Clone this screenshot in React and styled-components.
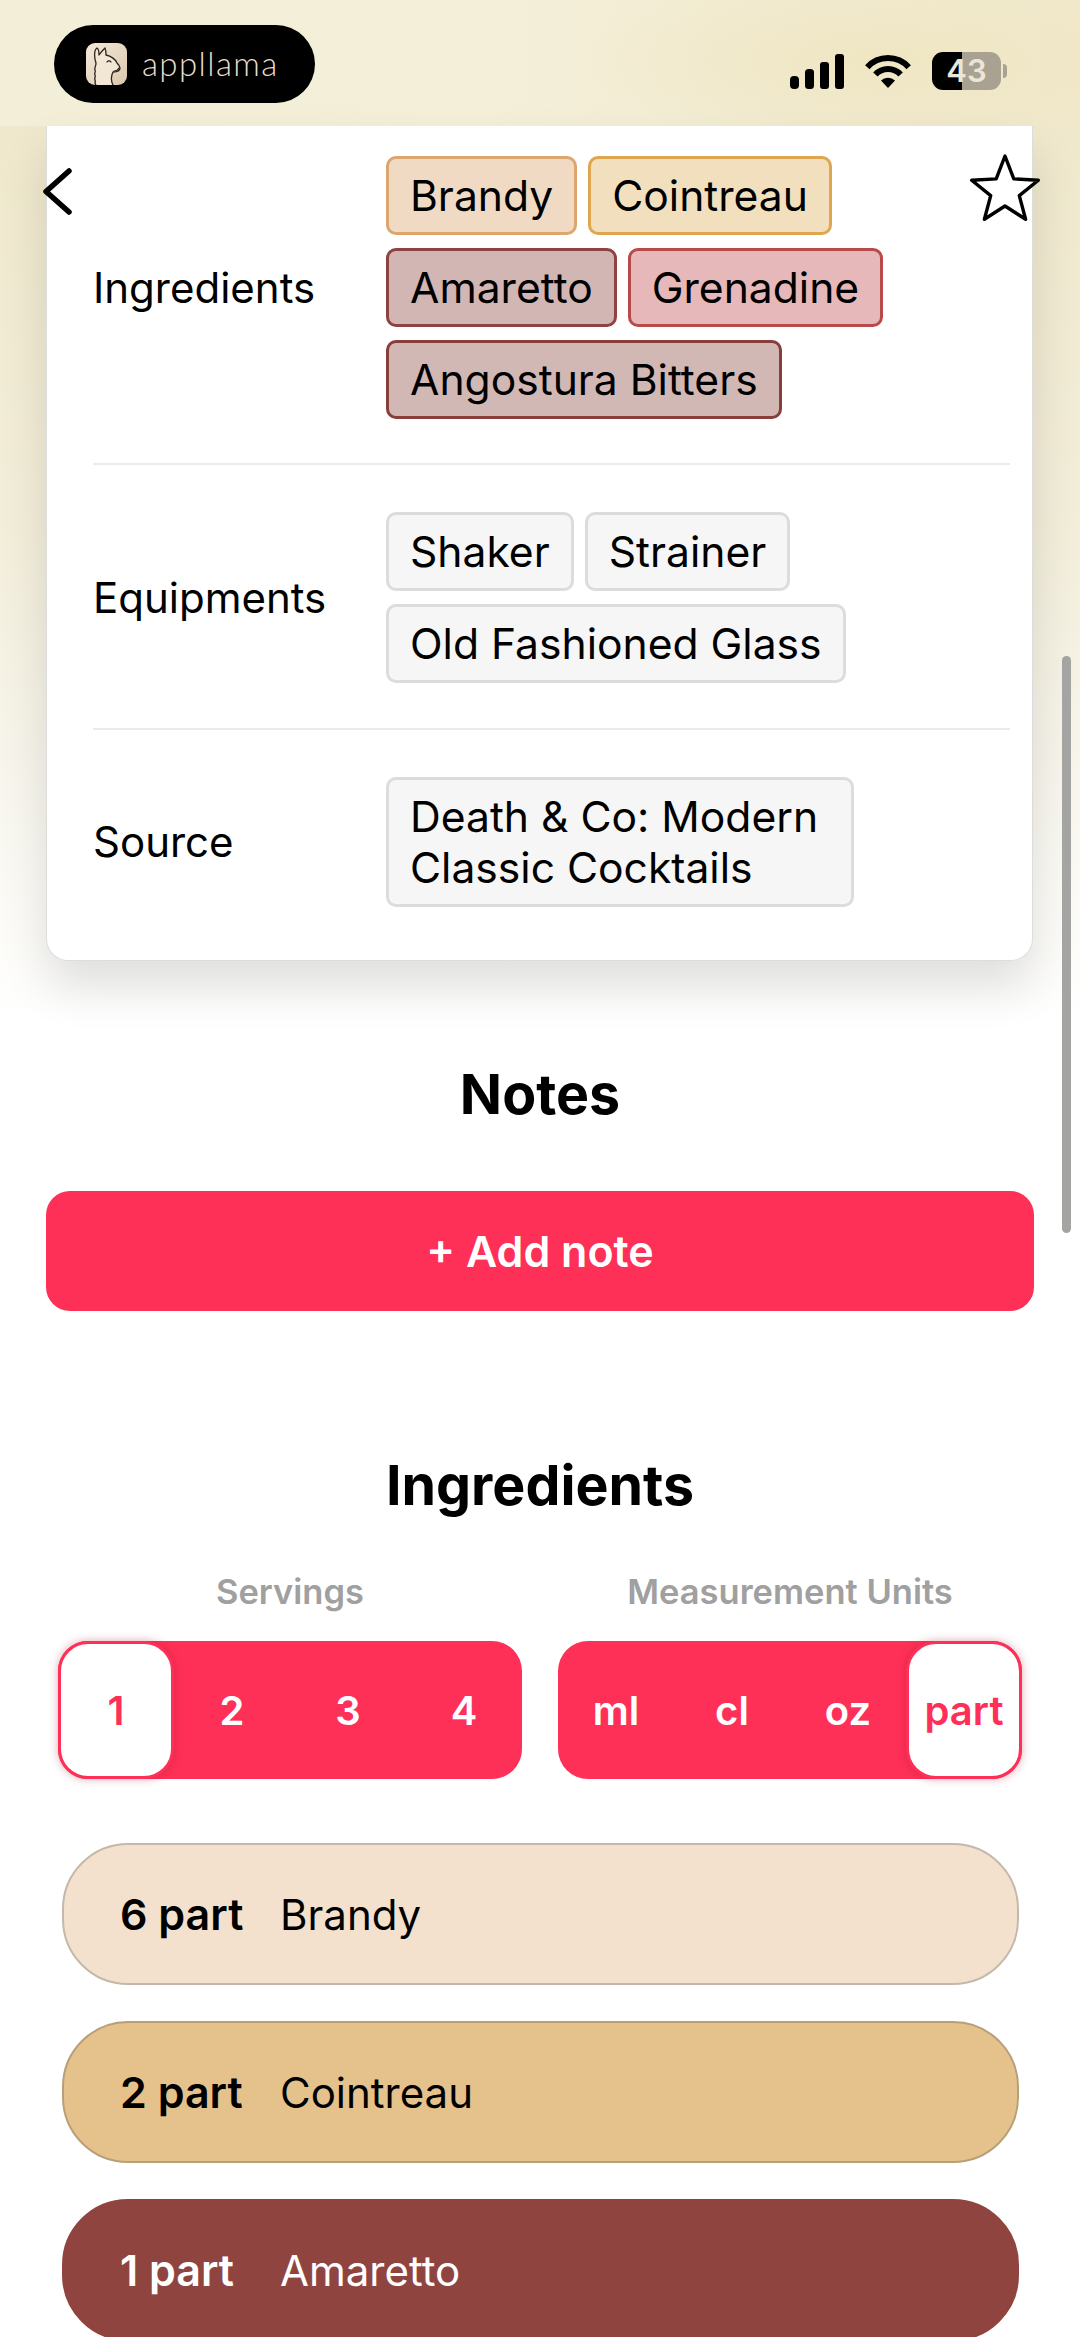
import styled, { createGlobalStyle } from "styled-components";

const GlobalStyle = createGlobalStyle`
  html, body {
    margin: 0;
    padding: 0;
    background: #ffffff;
  }
  * {
    box-sizing: border-box;
  }
`;

const Page = styled.div`
  position: relative;
  width: 1080px;
  height: 2337px;
  overflow: hidden;
  background: #ffffff;
  color: #000000;
  font-family: Inter, "Noto Sans", sans-serif;
`;

const StatusBar = styled.header`
  height: 126px;
  padding: 25px 79px 0 54px;
  display: flex;
  justify-content: space-between;
  align-items: flex-start;
  background:
    radial-gradient(ellipse 300px 90px at 880px 60px, #efe6c3 0%, rgba(239, 230, 195, 0) 100%),
    linear-gradient(90deg, #f3eed8 0%, #f4efd9 45%, #f0e8ca 100%);
`;

const BrandPill = styled.div`
  width: 261px;
  height: 78px;
  border-radius: 39px;
  background: #000000;
  display: flex;
  align-items: center;
  gap: 15px;
  padding-left: 32px;
`;

const BrandName = styled.span`
  font-family: Lato, sans-serif;
  font-weight: 300;
  font-size: 33px;
  letter-spacing: 1.4px;
  line-height: 1;
  color: #e8decd;
  padding-bottom: 2px;
`;

const StatusIcons = styled.div`
  display: flex;
  align-items: center;
  gap: 21px;
  padding-top: 27px;
`;

const Battery = styled.div`
  position: relative;
  width: 69px;
  height: 38px;
  border-radius: 11px;
  background: linear-gradient(90deg, #000000 0 43%, #a9a292 43% 100%);
  color: #ebe6d8;
  font-size: 31px;
  font-weight: 600;
  line-height: 38px;
  text-align: center;

  &::after {
    content: "";
    position: absolute;
    left: 71px;
    top: 12px;
    width: 4px;
    height: 14px;
    border-radius: 0 4px 4px 0;
    background: #a9a292;
  }
`;

const NavOverlay = styled.nav`
  position: absolute;
  top: 153px;
  left: 43px;
  right: 40px;
  display: flex;
  justify-content: space-between;
  align-items: flex-start;
`;

const BackIcon = styled.svg`
  margin-top: 15px;
`;

const Scrollbar = styled.div`
  position: absolute;
  top: 656px;
  left: 1062px;
  width: 9px;
  height: 577px;
  border-radius: 5px;
  background: #a4a4a2;
`;

const CardStage = styled.section`
  padding: 0 47px 60px 46px;
  background: linear-gradient(180deg, #efe8cc 0%, #f3eeda 45%, #f7f5ec 72%, #ffffff 100%);
`;

const Card = styled.div`
  background: #ffffff;
  border: 1px solid #dddddb;
  border-top: 0;
  border-radius: 0 0 22px 22px;
  padding: 30px 22px 0 46px;
  box-shadow: 0 26px 48px rgba(0, 0, 0, 0.12);
`;

const InfoRow = styled.div`
  display: grid;
  grid-template-columns: 293px 1fr;
  align-items: center;
  padding: ${(props) => props.$padding};
  border-bottom: ${(props) => (props.$last ? "none" : "2px solid #ebebeb")};
`;

const InfoLabel = styled.div`
  font-size: 42px;
  line-height: 48px;
`;

const ChipList = styled.div`
  display: flex;
  flex-wrap: wrap;
  gap: 13px 11px;
`;

const Chip = styled.span`
  display: inline-block;
  max-width: 468px;
  padding: 11px 21px;
  font-size: 42.6px;
  line-height: 51px;
  border-radius: 10px;
  border: 3px solid ${(props) => props.$border || "#dcdcdc"};
  background: ${(props) => props.$bg || "#f6f6f6"};
`;

const SectionTitle = styled.h2`
  margin: 0;
  font-size: 55.5px;
  font-weight: 700;
  line-height: 64px;
  text-align: center;
`;

const NotesSection = styled.section`
  margin-top: 41px;
  padding: 0 46px;
`;

const AddNoteButton = styled.button`
  display: block;
  width: 100%;
  height: 120px;
  margin-top: 65px;
  border: 0;
  border-radius: 24px;
  background: #ff3057;
  color: #ffffff;
  font-family: inherit;
  font-size: 43px;
  font-weight: 600;
`;

const IngredientsSection = styled.section`
  margin-top: 142px;
`;

const UnitControls = styled.div`
  margin-top: 55px;
  padding: 0 58px;
  display: flex;
  gap: 36px;
`;

const ControlGroup = styled.div`
  width: 464px;
`;

const ControlLabel = styled.div`
  font-size: 34.5px;
  font-weight: 600;
  line-height: 40px;
  color: #a0a0a0;
  text-align: center;
`;

const Segmented = styled.div`
  margin-top: 29px;
  height: 138px;
  display: grid;
  grid-template-columns: repeat(4, 1fr);
  border-radius: 30px;
  background: #ff3057;
`;

const SegmentOption = styled.div`
  display: flex;
  align-items: center;
  justify-content: center;
  border-radius: 30px;
  font-size: 40px;
  font-weight: 600;
  color: ${(props) => (props.$active ? "#ff3057" : "#ffffff")};
  background: ${(props) => (props.$active ? "#ffffff" : "transparent")};
  border: ${(props) => (props.$active ? "3px solid #ff3057" : "none")};
  box-shadow: ${(props) => (props.$active ? "0 0 10px rgba(160, 20, 50, 0.35)" : "none")};
`;

const IngredientList = styled.div`
  margin-top: 64px;
  padding: 0 61px 0 62px;
  display: flex;
  flex-direction: column;
  gap: 36px;
`;

const IngredientRow = styled.div`
  height: 142px;
  padding-left: 56px;
  display: flex;
  align-items: center;
  border-radius: 66px;
  font-size: 42px;
  background: ${(props) => props.$bg};
  color: ${(props) => props.$color};
  border: 2px solid ${(props) => props.$border};
`;

const Amount = styled.span`
  width: 160px;
  font-size: 43px;
  font-weight: 600;
`;

const ingredientChips = [
  { name: "Brandy", bg: "#f0dac4", border: "#dca66e" },
  { name: "Cointreau", bg: "#f2dfbe", border: "#e0a64f" },
  { name: "Amaretto", bg: "#d2b6b4", border: "#8f4340" },
  { name: "Grenadine", bg: "#e6b8ba", border: "#b94a4a" },
  { name: "Angostura Bitters", bg: "#d2b8b4", border: "#8a3e3a" },
];

const ingredients = [
  { amount: "6 part", name: "Brandy", bg: "#f3e1cd", color: "#000000", border: "#c4b8aa" },
  { amount: "2 part", name: "Cointreau", bg: "#e5c28c", color: "#000000", border: "#b89f78" },
  { amount: "1 part", name: "Amaretto", bg: "#90443f", color: "#ffffff", border: "#90443f" },
];

const SignalIcon = () => (
  <svg width="54" height="35" viewBox="0 0 54 35">
    <rect x="0" y="22" width="9" height="13" rx="4" fill="#000" />
    <rect x="15" y="15" width="9" height="20" rx="3.5" fill="#000" />
    <rect x="30" y="8" width="9" height="27" rx="3" fill="#000" />
    <rect x="45" y="0" width="9" height="35" rx="3" fill="#000" />
  </svg>
);

const WifiIcon = () => (
  <svg width="46" height="35" viewBox="0 0 46 35">
    <path d="M2.3 13.2A28 28 0 0 1 43.7 13.2" fill="none" stroke="#000" strokeWidth="6" />
    <path d="M10.4 20.6A17 17 0 0 1 35.6 20.6" fill="none" stroke="#000" strokeWidth="6" />
    <path d="M23 34L16 26.5A10 10 0 0 1 30 26.5Z" fill="#000" />
  </svg>
);

// llama mascot on its rounded tile
const LlamaLogo = () => (
  <svg width="41" height="42" viewBox="0 0 41 42">
    <defs>
      <linearGradient id="tile" x1="0" y1="0" x2="1" y2="1">
        <stop offset="0" stopColor="#f4e9da" />
        <stop offset="1" stopColor="#dcc7ad" />
      </linearGradient>
    </defs>
    <rect width="41" height="42" rx="9" fill="url(#tile)" />
    <path
      d="M10 42V20C8 14 8 7 11 5c2 1 2 4 2 7 2-3 4-5 6-7 1 2 1 4 1 7 5 1 9 4 11 8 2 2 3 3 3 5 0 3-3 4-7 4-2 4-2 9 0 13H10Z"
      fill="#f2e6d4"
    />
    <path
      d="M10 42c-2-2 0-3-1-5s1-3 0-5 1-3 0-5 1-3 1-7C8 14 8 7 11 5c2 1 2 4 2 7 2-3 4-5 6-7 1 2 1 4 1 7 5 1 9 4 11 8 2 2 3 3 3 5 0 3-3 4-7 4-2 4-2 9 0 13"
      fill="none"
      stroke="#2a2420"
      strokeWidth="1.3"
      strokeLinecap="round"
      strokeLinejoin="round"
    />
    <path d="M21 19c1-1.5 3-1.5 4 0M28 28c2 0 4-1 5-3" fill="none" stroke="#2a2420" strokeWidth="1.2" strokeLinecap="round" />
  </svg>
);

const App = () => {
  return (
    <Page>
      <GlobalStyle />
      <StatusBar>
        <BrandPill>
          <LlamaLogo />
          <BrandName>appllama</BrandName>
        </BrandPill>
        <StatusIcons>
          <SignalIcon />
          <WifiIcon />
          <Battery>43</Battery>
        </StatusIcons>
      </StatusBar>

      <CardStage>
        <Card>
          <InfoRow $padding="0 0 44px">
            <InfoLabel>Ingredients</InfoLabel>
            <ChipList>
              {ingredientChips.map((chip) => (
                <Chip key={chip.name} $bg={chip.bg} $border={chip.border}>
                  {chip.name}
                </Chip>
              ))}
            </ChipList>
          </InfoRow>
          <InfoRow $padding="47px 0 45px">
            <InfoLabel>Equipments</InfoLabel>
            <ChipList>
              <Chip>Shaker</Chip>
              <Chip>Strainer</Chip>
              <Chip>Old Fashioned Glass</Chip>
            </ChipList>
          </InfoRow>
          <InfoRow $padding="47px 0 53px" $last>
            <InfoLabel>Source</InfoLabel>
            <ChipList>
              <Chip>Death &amp; Co: Modern Classic Cocktails</Chip>
            </ChipList>
          </InfoRow>
        </Card>
      </CardStage>

      <NotesSection>
        <SectionTitle>Notes</SectionTitle>
        <AddNoteButton>+ Add note</AddNoteButton>
      </NotesSection>

      <IngredientsSection>
        <SectionTitle>Ingredients</SectionTitle>
        <UnitControls>
          <ControlGroup>
            <ControlLabel>Servings</ControlLabel>
            <Segmented>
              {["1", "2", "3", "4"].map((value) => (
                <SegmentOption key={value} $active={value === "1"}>
                  {value}
                </SegmentOption>
              ))}
            </Segmented>
          </ControlGroup>
          <ControlGroup>
            <ControlLabel>Measurement Units</ControlLabel>
            <Segmented>
              {["ml", "cl", "oz", "part"].map((value) => (
                <SegmentOption key={value} $active={value === "part"}>
                  {value}
                </SegmentOption>
              ))}
            </Segmented>
          </ControlGroup>
        </UnitControls>
        <IngredientList>
          {ingredients.map((item) => (
            <IngredientRow key={item.name} $bg={item.bg} $color={item.color} $border={item.border}>
              <Amount>{item.amount}</Amount>
              {item.name}
            </IngredientRow>
          ))}
        </IngredientList>
      </IngredientsSection>

      <NavOverlay>
        <BackIcon width="29" height="47" viewBox="0 0 29 47">
          <path d="M26 3L3 23.5L26 44" fill="none" stroke="#000" strokeWidth="5.5" strokeLinecap="round" strokeLinejoin="round" />
        </BackIcon>
        <svg width="70" height="70" viewBox="0 0 70 70">
          <path
            d="M35 3L43.8 25.9L68.3 27.2L49.3 42.6L55.6 66.3L35 53L14.4 66.3L20.7 42.6L1.7 27.2L26.2 25.9Z"
            fill="#fff"
            stroke="#000"
            strokeWidth="3.4"
            strokeLinejoin="round"
          />
        </svg>
      </NavOverlay>
      <Scrollbar />
    </Page>
  );
};

export default App;
